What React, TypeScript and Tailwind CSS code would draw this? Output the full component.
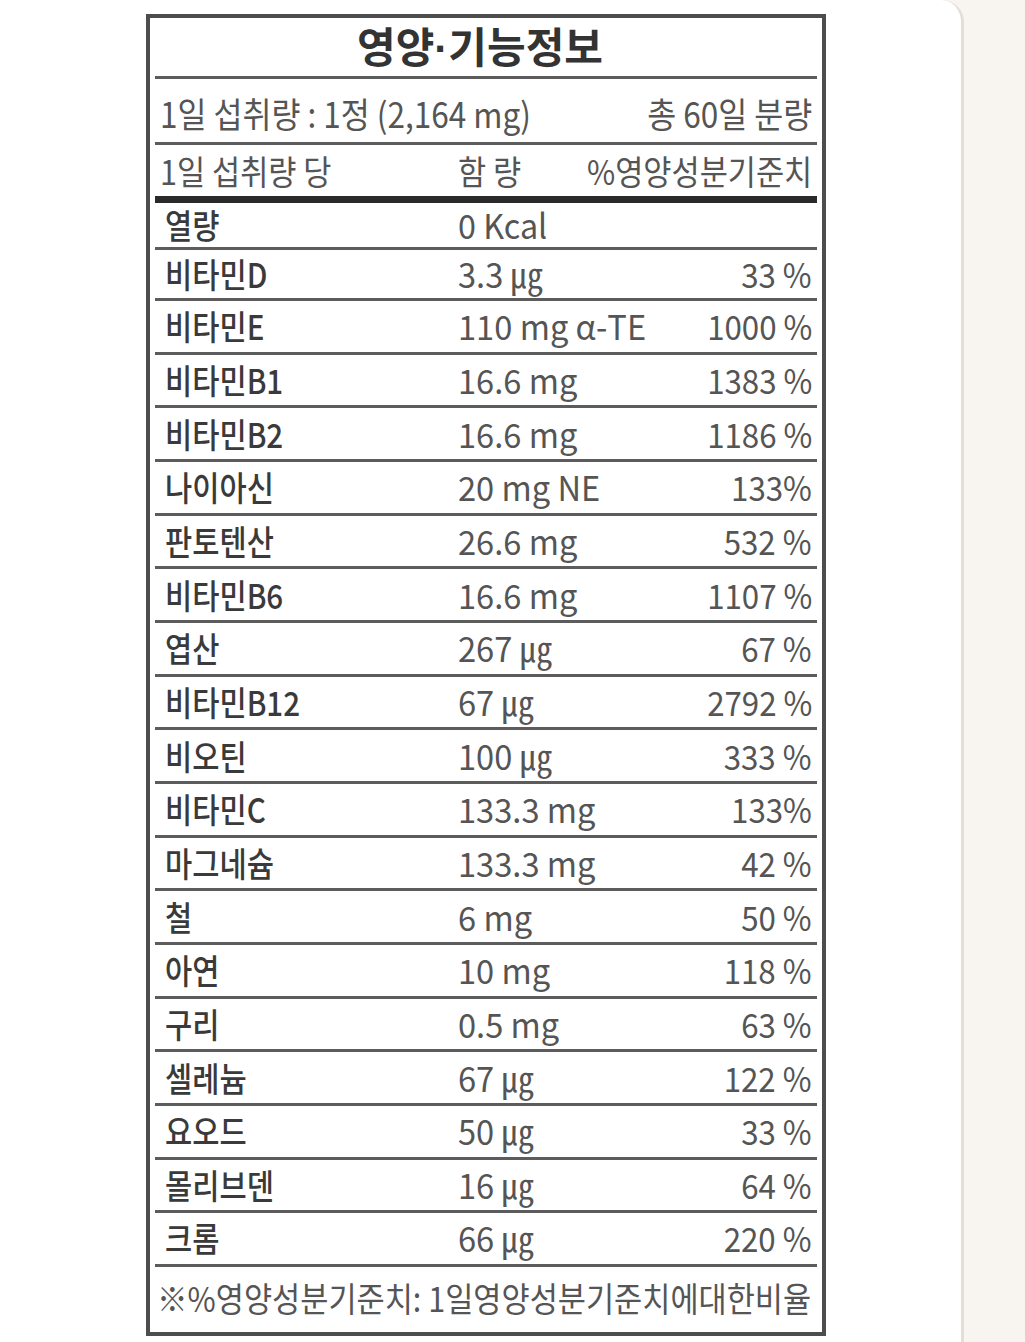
import React from "react"

type Row = { name: string; amount: string; pct: string }

const rows: Row[] = [
  { name: "비타민D", amount: "3.3 ㎍", pct: "33 %" },
  { name: "비타민E", amount: "110 mg α-TE", pct: "1000 %" },
  { name: "비타민B1", amount: "16.6 mg", pct: "1383 %" },
  { name: "비타민B2", amount: "16.6 mg", pct: "1186 %" },
  { name: "나이아신", amount: "20 mg NE", pct: "133%" },
  { name: "판토텐산", amount: "26.6 mg", pct: "532 %" },
  { name: "비타민B6", amount: "16.6 mg", pct: "1107 %" },
  { name: "엽산", amount: "267 ㎍", pct: "67 %" },
  { name: "비타민B12", amount: "67 ㎍", pct: "2792 %" },
  { name: "비오틴", amount: "100 ㎍", pct: "333 %" },
  { name: "비타민C", amount: "133.3 mg", pct: "133%" },
  { name: "마그네슘", amount: "133.3 mg", pct: "42 %" },
  { name: "철", amount: "6 mg", pct: "50 %" },
  { name: "아연", amount: "10 mg", pct: "118 %" },
  { name: "구리", amount: "0.5 mg", pct: "63 %" },
  { name: "셀레늄", amount: "67 ㎍", pct: "122 %" },
  { name: "요오드", amount: "50 ㎍", pct: "33 %" },
  { name: "몰리브덴", amount: "16 ㎍", pct: "64 %" },
  { name: "크롬", amount: "66 ㎍", pct: "220 %" },
]

// condensed look of the printed label: squeeze text horizontally
function L({ children, className = "scale-x-[0.9]" }: { children: React.ReactNode; className?: string }) {
  return <span className={`inline-block origin-left whitespace-nowrap ${className}`}>{children}</span>
}

function R({ children, className = "scale-x-[0.9]" }: { children: React.ReactNode; className?: string }) {
  return <span className={`inline-block origin-right whitespace-nowrap ${className}`}>{children}</span>
}

export default function App() {
  return (
    <div
      className="flex h-[1342px] w-[1025px] bg-[#f8f5f0]"
      style={{ fontFamily: '"Noto Sans CJK KR", "Noto Sans", sans-serif' }}
    >
      <div className="h-full w-[964px] rounded-tr-[22px] border-r-[3px] border-[#e3ded6] bg-white pl-[146px] pt-[14px]">
        <div className="h-[1322px] w-[680px] border-[4px] border-[#4d4d4d] px-[5px]">
          {/* title */}
          <div className="flex h-[61px] items-center justify-center border-b-[3px] border-[#5c5c5c] pr-[12px] text-[42px] font-bold leading-none text-[#333]">
            <span className="inline-block whitespace-nowrap">
              영양<span className="font-['Liberation_Sans',sans-serif]">·</span>기능정보
            </span>
          </div>

          {/* serving */}
          <div className="flex h-[66px] items-center justify-between border-b-[3px] border-[#5c5c5c] px-[5px] pt-[4px] text-[35px] leading-none text-[#555]">
            <L>1일 섭취량 : 1정 (2,164 mg)</L>
            <R>총 60일 분량</R>
          </div>

          {/* column header */}
          <div className="flex h-[58px] items-center border-b-[7px] border-[#2a2a2a] px-[5px] text-[34px] leading-none text-[#555]">
            <div className="w-[298px]">
              <L>1일 섭취량 당</L>
            </div>
            <div className="flex-1">
              <L>함 량</L>
            </div>
            <R>%영양성분기준치</R>
          </div>

          {/* calories */}
          <div className="flex h-[47px] items-center border-b-[3px] border-[#5c5c5c] pl-[10px] pr-[5px] text-[34px] leading-none">
            <div className="w-[293px] font-medium text-[#3a3a3a]">
              <L className="scale-x-[0.87]">열량</L>
            </div>
            <div className="flex-1 text-[#555]">
              <L className="scale-x-[0.95]">0 Kcal</L>
            </div>
          </div>

          {rows.map((r, i) => (
            <div
              key={r.name}
              className={`flex items-center border-b-[3px] border-[#5c5c5c] pl-[10px] pr-[5px] text-[34px] leading-none ${
                i === 0 ? "h-[51px]" : "h-[53.67px]"
              }`}
            >
              <div className="w-[293px] font-medium text-[#3a3a3a]">
                <L className="scale-x-[0.87]">{r.name}</L>
              </div>
              <div className="flex-1 text-[#555]">
                <L className="scale-x-[0.96]">{r.amount}</L>
              </div>
              <R className="scale-x-[0.92] text-[#555]">{r.pct}</R>
            </div>
          ))}

          {/* footnote */}
          <div className="flex h-[62px] items-center overflow-hidden px-[2px] text-[34px] leading-none text-[#555]">
            <span className="inline-block origin-left scale-x-[0.9] whitespace-nowrap">
              ※%영양성분기준치: 1일영양성분기준치에대한비율
            </span>
          </div>
        </div>
      </div>
    </div>
  )
}
